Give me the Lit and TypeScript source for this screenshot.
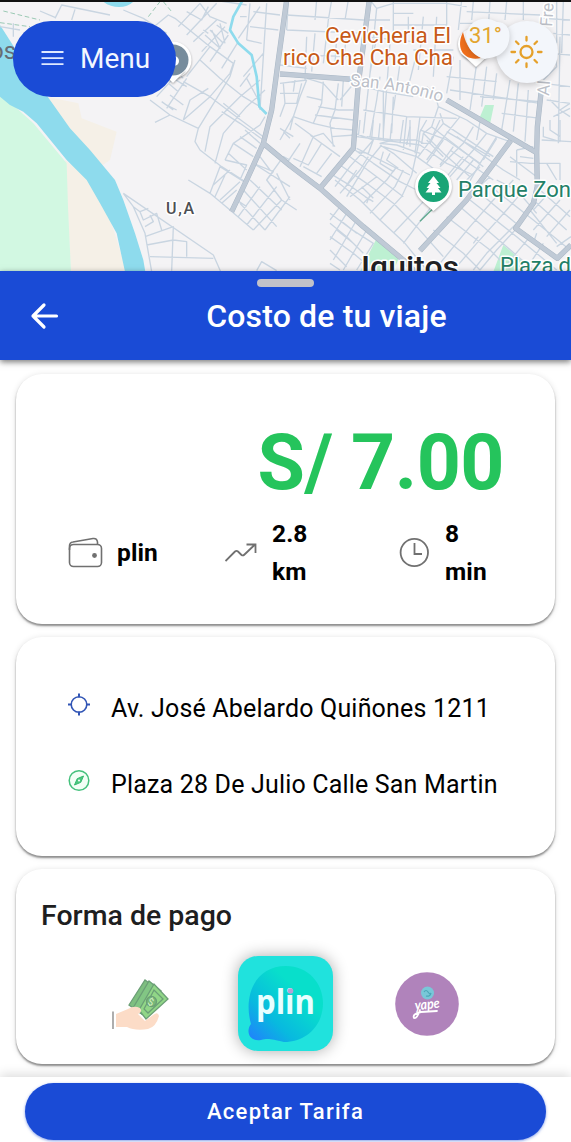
import { LitElement, html, css, svg } from "lit";
import { customElement, property } from "lit/decorators.js";

/* Street traces are kept in sheets of a third of a pixel per unit. */
const westStreets = [
  "M165 55L185 15L330 45M120 33L165 52M225 28L215 60M0 80L60 90M40 70V110M370 30L430 55L500 100",
  "M370 580L640 765L662 815M370 580L400 620L435 700L455 815M400 620L420 635L445 625M420 635L430 660L470 640L485 690M435 680L460 665L450 645M435 710L520 680L515 812M440 735L520 720L560 725V770M450 770L640 775M770 812L785 785L830 812",
].join("");

const centerStreets = [
  "M0 90L55 45L75 55L180 140L250 190M85 80L150 10M110 105L200 10M40 150L0 110M175 20L155 60L110 35M190 0L290 15M150 10L180 50L230 70",
  "M130 125L200 60M165 105L210 145L185 90M180 90L220 130M200 75L235 100M210 70L225 130M155 155L225 80M180 185L235 105M215 205L265 125M175 100L160 90",
  "M110 230L180 140L250 190L240 220L180 290L100 360M0 265L60 205L100 235M20 290L70 235L110 260M50 325L110 235M60 285L100 315M35 305L70 330M85 275L55 250M100 245L180 290L265 355L340 410M150 180L210 235L280 290L330 320",
  "M0 300L60 345L145 385L135 425L150 450L215 500L285 545M15 367L60 345M80 330L50 315M100 360L120 300L175 265M165 455L180 380L270 290L330 240M145 385L240 230L255 180M195 490L220 400L290 320L345 270M215 335L270 370L340 420",
  "M225 480L250 430L330 375L345 350M225 480L290 495L270 540M250 430L310 470M270 410L320 445M235 460L290 510M285 390L330 430M220 310L270 350M290 235L325 300M300 220L270 260M280 230L340 160M265 115L330 20M270 50H290M290 120L335 130M350 10L330 330M300 10L290 120M310 35L390 45M300 80L385 90",
  "M115 540L180 580L240 630L310 690M180 580L210 500L290 550M195 590L225 525M210 600L270 545M240 510L190 555M215 610L260 570M285 545L310 490L370 515L350 540L395 600L440 630M260 600L290 620M310 490L420 560M300 540L395 630M280 570L380 680M270 610L345 690M265 650L330 560M290 675L380 560M310 690L395 600M345 690L420 590M350 540L400 470L420 480M380 520L420 600M330 470L360 510",
].join("");

const eastStreets = [
  "M25 0L20 90M20 45L250 60M20 90L250 100M110 0L105 60M155 0L145 60L130 190M205 0L195 60M80 110L75 240M10 165L250 170M45 150L40 200M105 100L95 215M170 110L165 195M0 195L80 205M200 90L190 200",
  "M270 0L290 25L340 10H500L560 20M290 25L270 220M340 0V100M340 40H400M340 75H500M385 50V100M430 50L415 210M500 0V110M470 50L460 230M400 150H520M330 130L310 400M290 110L270 220L250 400M360 190L340 330M405 180L385 260M250 60H330M250 110L400 125M540 70H580M545 0L535 90M520 170L500 280",
  "M580 5L575 60M630 5L625 80M680 5L675 60M730 5V60M560 35L780 45M830 5V130M850 5L845 160M790 55L870 60M820 100L870 105M810 160L870 165M820 130L830 200L790 240",
  "M540 180V300M590 190L570 330M620 200L605 320M650 220L640 300M690 240L665 390M715 250L700 395M745 270L735 425M500 230L650 245M510 270L780 310M600 290L780 305M665 340L780 355M790 250L870 260M840 110L835 430M800 300L870 310M810 300L840 330L870 310M820 350L870 325M840 330L870 350",
  "M0 250L80 240M10 250L15 310H50L65 250M0 280H55M45 240L40 275M80 235L130 250L175 300M80 240L60 290L40 350L30 390M130 245L125 310L100 370L40 350M80 290L125 300M115 320L175 330H220M175 250L165 330L150 370L160 440M190 240L185 320M230 240L180 300M105 345L220 360M165 385L220 390M100 370L165 385M155 410L225 405M15 310L0 350M0 385L40 410M0 420L40 350M45 370L100 410L60 500M10 395L30 415M90 405L180 470M125 430L85 495L40 475M155 460L110 520M165 440L130 400L100 410M70 500L125 530M20 490L60 430",
  "M250 260L310 275L400 290M250 330L380 350L530 355M300 230L290 300L270 410M310 270L310 420M340 290L335 400M380 350L370 450M390 360V440M420 350L405 460M440 260L465 280L475 320L455 380L430 400L425 430L450 430L465 400L490 370L480 340M260 410L340 420H410L430 430M340 420L300 430L350 435L420 460",
  "M475 320L560 360L620 400L690 425M490 370L580 430L640 470M455 380L545 450L610 500M430 400L490 460L570 530M540 350L500 400L440 480M580 380L550 430L480 500M620 400L580 450L510 530M650 410L600 490L560 560",
].join("");

const southStreets = [
  "M75 40L130 60L115 100L80 95M80 50L270 75L350 130L430 165M90 0L85 50M130 0L125 55M150 10L145 60M185 10L180 65M220 0L210 70M240 20L230 75M270 35L265 75L245 165M160 80L260 110L330 160M80 85L240 165M75 90L130 130L210 185L260 210M150 75L190 100L260 160M160 95L150 130L190 155L200 140M205 145L170 120L180 100",
  "M130 60L60 140L15 200M155 75L110 130L50 230M115 110L90 150L30 220M200 140L170 180L100 250M220 150L195 200L120 280M245 165L215 230L150 300M280 245L190 340M300 265L220 370M15 180L90 240L150 300L225 370L290 450M0 160L50 190L120 240M30 135L110 190L190 250L260 320L340 410M60 110L140 170L220 230M60 230L140 170M40 210L80 150M95 200L130 235M105 230L130 245M120 225L110 250",
  "M0 280L60 325L130 370L80 450M30 260L0 300M50 280L0 360M80 300L10 420M110 330L40 450M0 310L50 350L100 400M0 350L70 400L130 450M0 390L50 440M30 300L80 340M20 330L70 370M0 430L30 450",
  "M360 90L490 180M380 50L520 150M350 35L480 110M290 60L340 110M310 50L265 110M340 60L290 130M370 80L330 135M400 110L350 170M430 120L380 180M450 140L390 200M480 170L430 215M270 30L350 60L450 130M290 0L270 35M330 0L300 65M450 5L440 60M500 55L460 120",
  "M540 110L620 170L610 250M520 150L570 180M500 180L560 210L620 280M470 190L610 300L720 390M450 220L570 320M420 240L560 350L680 450M390 260L530 380L610 450M350 290L480 390L540 450M310 330L400 400L450 450M550 180L490 240L420 320L330 430M590 200L530 270L440 370L380 440M620 230L570 300L470 400L430 450M560 325L500 390L450 450M600 350L550 410L520 450M640 370L600 430M430 370L445 350M620 340L610 370",
  "M540 125L600 130H690V180M560 90L610 80M560 90V170M570 110L610 115M650 130L680 180M690 130L690 180M635 60L723 65M640 20L640 50L690 65V0M660 0V30L690 50M630 210L720 290M610 240L710 330M600 270L680 370M720 270L650 350M690 240L610 330M660 215L610 270M723 350L680 380",
].join("");

const roads =
  "M860 0L835 180L815 330L790 430L740 540L695 635M790 430L870 497L960 565L1090 680L1210 780L1260 830M840 222L870 224L1082 240M1108 0L1075 250L1060 445L960 565M1340 300L1610 458M1532 422L1400 600L1260 752M1624 270L1612 380L1610 458L1612 560L1600 610L1547 685L1672 775L1713 735";

@customElement("city-map")
export class CityMap extends LitElement {
  static styles = css`
    :host { display: block; height: 271px; overflow: hidden; }
    svg { display: block; font-family: Roboto, sans-serif; }
    .land { fill: #f4f3f5; }
    .park { fill: #d2f8e2; }
    .plaza { fill: #bdf0d2; }
    .sand { fill: #f5f0e7; }
    .water { fill: #8edbed; }
    .creek { fill: none; stroke: #8edbed; stroke-width: 8; stroke-linejoin: round; }
    .street { fill: none; stroke: #c9d5e1; stroke-width: 4; stroke-linejoin: round; }
    .road-edge { fill: none; stroke: #a9b7c5; stroke-width: 16; stroke-linejoin: round; }
    .road { fill: none; stroke: #c0cad6; stroke-width: 13; stroke-linejoin: round; }
    .halo { paint-order: stroke; stroke: #fff; stroke-width: 3; stroke-linejoin: round; }
    .food { fill: #c75a18; font-size: 22.500px; }
    .green { fill: #238067; font-size: 22px; }
    .avenue { fill: #bcc0c8; font-size: 17px; }
    .city { fill: #202124; font-size: 29px; font-weight: 500; }
    .zone { fill: #4c4f53; font-size: 16px; font-weight: 500; }
    .temp { fill: #e3a52f; font-size: 22px; }
    .bubble { fill: #f3f6fb; filter: drop-shadow(0 2px 3px #0003); }
    .pin { fill: #fff; filter: drop-shadow(0 1px 1px #0005); }
  `;
  render() {
    return html`<svg width="571" height="271" viewBox="0 0 571 271">
      <rect class="land" width="571" height="271" />
      <g transform="scale(.33333)">
        <path class="sand" d="M140 290L235 310L245 355L350 395L330 480L300 500L200 400ZM195 480L300 560L380 815H213Z" />
        <path class="park" d="M0 280L100 370L200 490L204 620L213 815H0Z" />
        <path class="plaza" d="M1455 315H1482L1470 372L1440 350ZM1130 715L1200 765L1180 815H1080ZM1510 735L1570 785L1550 815H1480Z" />
        <path class="water" d="M0 75L80 200L150 300L210 385L270 450L345 540L370 600L405 700L430 780L436 815H375L350 700L300 610L260 540L200 480L110 370L70 335L30 315L0 290ZM310 5C340 28 380 25 400 5Z" />
        <path class="street" d=${westStreets} />
        <path class="street" transform="translate(450)" d=${centerStreets} />
        <path class="street" transform="translate(840)" d=${eastStreets} />
        <path class="street" transform="translate(990 360)" d=${southStreets} />
        <path class="creek" d="M728 0L700 50L690 90L715 130L755 165L770 230L778 320L800 342" />
        <path class="road-edge" d=${roads} />
        <path class="road" d=${roads} />
        <path d="M10 33L120 60M0 68L90 80M445 50L480 5M490 5L515 35" fill="none" stroke="#9bc9b4" stroke-width="3" stroke-dasharray="14 8" />
        <path d="M1260 664L1300 625" stroke="#5fa98d" stroke-width="4" />
      </g>
      <text x="-10" y="59" font-size="24" fill="#666c74">os</text>
      <circle cx="173" cy="60" r="18.500" class="pin" /><path class="pin" d="M160 70L173 83L186 70Z" />
      <circle cx="173" cy="60" r="15.500" fill="#778c9c" /><circle cx="174" cy="61" r="5" fill="#fff" />
      <text class="food halo" x="325" y="43" textLength="126">Cevicheria El</text>
      <text class="food halo" x="283" y="65" textLength="170">rico Cha Cha Cha</text>
      <path id="ave" d="M350 86Q405 89 446 104" fill="none" />
      <text class="avenue halo"><textPath href="#ave" textLength="93">San Antonio</textPath></text>
      <text class="avenue halo" transform="translate(552 27) rotate(-86)">Fre</text>
      <text class="avenue halo" transform="translate(549 96) rotate(-86)">Al</text>
      <circle class="bubble" cx="527" cy="52" r="31" />
      <circle class="pin" cx="474" cy="44" r="16" /><path class="pin" d="M461 53L476 67L490 54Z" />
      <path d="M463 32C455 48 464 62 481 58C472 54 466 46 463 32Z" fill="#f0701d" />
      <path class="bubble" d="M466 34C470 19 485 15 497 22C510 22 512 36 507 47C501 57 493 57 485 59C474 56 466 48 466 34Z" />
      <text class="temp" x="469" y="43" textLength="33">31°</text>
      <g fill="none" stroke="#e5a02a" stroke-width="2.300" stroke-linecap="round">
        <circle cx="526.500" cy="52" r="6" />
        <path d="M526.500 37v3.500M526.500 63.500v3.500M511.500 52h3.500M538 52h3.500M516 41.500l2.500 2.500M534.500 60l2.500 2.500M516 62.500l2.500-2.500M534.500 44l2.500-2.500" />
      </g>
      <path class="pin" d="M433.500 168a18.500 18.500 0 0 1 12 32.500L433.500 211L421.500 200.500a18.500 18.500 0 0 1 12-32.500Z" />
      <circle cx="433.500" cy="186.500" r="15.500" fill="#19a576" />
      <path d="M433.500 176l-5.500 7h2.500l-4 5h2.500l-3.500 4.500h6.500v2.500h3v-2.500h6.500l-3.500-4.500h2.500l-4-5h2.500Z" fill="#fff" />
      <text class="green halo" x="458" y="197" textLength="113">Parque Zon</text>
      <text class="city halo" x="361" y="276.500" textLength="98" lengthAdjust="spacingAndGlyphs">Iquitos</text>
      <text class="green halo" x="500" y="273" textLength="71">Plaza d</text>
      <text class="zone halo" x="166" y="214" textLength="28">U,A</text>
    </svg>`;
  }
}

const glyphs: Record<string, unknown> = {
  wallet: svg`<g fill="none" stroke="currentColor" stroke-width="1.600" stroke-linejoin="round">
    <rect x="1.500" y="8.500" width="32" height="22" rx="4" /><path d="M1.500 14V10Q1.500 6.500 5 6L25 2.500Q29 2 29.500 6V8" /></g>
    <circle cx="26.500" cy="19.500" r="2.400" fill="currentColor" />`,
  trend: svg`<path d="M0.500 25L10 15.500Q11.500 14.300 13 15.500L16.500 19Q18 20 19.500 18.500L30 8.500M21.500 8.500H30.500V17" fill="none" stroke="currentColor" stroke-width="1.800" />`,
  clock: svg`<circle cx="16.300" cy="16.500" r="13.700" fill="none" stroke="currentColor" stroke-width="1.800" /><path d="M16.500 7V18H24" fill="none" stroke="currentColor" stroke-width="1.800" />`,
  origin: svg`<g fill="none" stroke="#3155b5" stroke-width="1.600"><circle cx="12" cy="11.500" r="7.800" /><path stroke-width="2" d="M12 0.500v4M12 18.500v4M1 11.500h4M19 11.500h4" /></g>`,
  compass: svg`<circle cx="12" cy="11.500" r="9.800" fill="#f2fff6" stroke="#45c17d" stroke-width="1.500" /><path d="M16.500 7L13.800 13.300L7.500 16L10.200 9.700Z" fill="#4cc880" stroke="#35b970" /><circle cx="12" cy="11.500" r="1" fill="#fff" />`,
};

@customElement("ride-fact")
export class RideFact extends LitElement {
  @property() icon = "";
  @property() label = "";
  static styles = css`
    :host { display: flex; align-items: center; color: #707070; }
    svg { flex: none; }
    .label { color: #000; font: 700 24.500px/38px Roboto, sans-serif; letter-spacing: .1px; white-space: pre-line; }
  `;
  render() {
    return html`<svg width="47" height="34" viewBox="0 0 47 34">${glyphs[this.icon]}</svg><span class="label">${this.label}</span>`;
  }
}

@customElement("app-root")
export class AppRoot extends LitElement {
  static styles = css`
    :host { display: flex; flex-direction: column; position: relative; height: 1142px; overflow: hidden; background: #fff; font-family: Roboto, sans-serif; color: #000; }
    * { box-sizing: border-box; }
    .status { position: absolute; top: 0; left: 0; right: 0; height: 1.500px; background: #111; }
    .menu { position: absolute; left: 13px; top: 21px; width: 163px; height: 76px; border: 0; border-radius: 38px; background: #1a4bd6; color: #f3f7ff; display: flex; align-items: center; padding: 0 0 2px 28px; gap: 15px; font: 400 28px Roboto, sans-serif; }
    .bar { flex: none; height: 89px; background: #1a4bd6; display: grid; grid-template-columns: 82px 1fr; align-items: center; color: #fff; box-shadow: 0 2px 6px #0008; z-index: 1; position: relative; }
    .back { margin: 0 0 0 30px; }
    .title { margin: 0; text-align: center; font-size: 32px; font-weight: 500; letter-spacing: .15px; }
    .grip { position: absolute; left: 257px; top: 8px; width: 57px; height: 8px; border-radius: 4px; background: #c2c2c9; }
    .cards { flex: 1; display: flex; flex-direction: column; gap: 13px; padding: 14px 16px 0; min-height: 0; }
    .card { flex: none; background: #fff; border-radius: 26px; box-shadow: 0 2px 2px #0006, 0 1px 6px #0002; }
    .fare { height: 250px; padding: 44px 28px 0 52px; }
    .price { height: 90px; line-height: 90px; text-align: right; padding-right: 23px; font-size: 77px; font-weight: 700; color: #25c45c; letter-spacing: -.5px; }
    .facts { display: grid; grid-template-columns: 157px 173px 1fr; align-items: center; margin-top: 7px; }
    .wide { gap: 2px; }
    .route { height: 219px; padding: 52px 40px 0 51px; display: flex; flex-direction: column; gap: 38px; }
    .stop { display: flex; align-items: center; gap: 20px; height: 38px; font-size: 25px; letter-spacing: .18px; white-space: nowrap; }
    .stop svg { flex: none; margin-top: -6px; }
    .pay { height: 195px; padding: 27px 25px 0; }
    .heading { margin: 0; font-size: 28.500px; line-height: 40px; font-weight: 500; color: #1e1e20; }
    .methods { display: grid; grid-template-columns: repeat(3, 1fr); width: 426px; margin: 20px 0 0 31px; justify-items: center; align-items: center; }
    .cash { margin-right: 7px; }
    .plin { width: 95px; height: 95px; border-radius: 20px; background: #20e2dd; box-shadow: 0 0 16px #0005; }
    .foot { flex: none; position: relative; height: 65px; background: #fff; padding: 6px 25px 0; box-shadow: 0 -3px 10px #0002; }
    .accept { width: 521px; height: 57px; border: 0; border-radius: 29px; background: #1a4bd6; color: #fff; font: 500 22px Roboto, sans-serif; letter-spacing: 1.300px; display: block; box-shadow: 0 1px 3px #1a4bd688; }
    .logo { display: block; font-family: Roboto, sans-serif; }
    .plin-word { font: 700 34px "Open Sans", sans-serif; fill: #e9ffff; }
    .yape-word { font: italic 700 14px Lato, sans-serif; fill: #fff; }
  `;

  render() {
    return html`
      <city-map></city-map>
      <div class="status"></div>
      <button class="menu">
        <svg width="24" height="16" viewBox="0 0 24 16"><path d="M0.500 2H22.500M0.500 8.200H22.500M0.500 14.200H22.500" stroke="#dfe9ff" stroke-width="1.800" /></svg>
        Menu
      </button>
      <header class="bar">
        <span class="grip"></span>
        <svg class="back" width="30" height="30" viewBox="0 0 30 30"><path d="M14 4L3 15L14 26M3 15H26.500" fill="none" stroke="#fff" stroke-width="3.200" stroke-linecap="round" stroke-linejoin="round" /></svg>
        <h1 class="title">Costo de tu viaje</h1>
      </header>
      <main class="cards">
        <section class="card fare">
          <div class="price">S/ 7.00</div>
          <div class="facts">
            <ride-fact class="wide" icon="wallet" label="plin"></ride-fact>
            <ride-fact icon="trend" label=${"2.8\nkm"}></ride-fact>
            <ride-fact icon="clock" label=${"8\nmin"}></ride-fact>
          </div>
        </section>
        <section class="card route">
          <div class="stop"><svg width="24" height="24">${glyphs.origin}</svg>Av. José Abelardo Quiñones 1211</div>
          <div class="stop"><svg width="24" height="24">${glyphs.compass}</svg>Plaza 28 De Julio Calle San Martin</div>
        </section>
        <section class="card pay">
          <h2 class="heading">Forma de pago</h2>
          <div class="methods">
            <svg class="logo cash" width="64" height="64" viewBox="0 0 64 64">
              <g stroke="#6b9f76" stroke-width="1.300">
                <path d="M21 33L37 8L50 18L34 42Z" fill="#7ebf80" /><path d="M25 36L41 9L53 19L37 44Z" fill="#82c684" />
                <path d="M31 38L46 12L60 27L38 47Z" fill="#91d687" /><path d="M36 37L46 18L55 27L40 41Z" fill="none" />
                <circle cx="43.500" cy="29.500" r="5" fill="#78b878" />
              </g>
              <text x="40" y="33.500" font-size="10" fill="#d8f3c9" transform="rotate(20 43 30)">$</text>
              <path d="M8 42L20 37Q26 33 32 36Q35 40 30 42L37 49L45 43Q50 39 51 44Q48 55 40 57Q27 59 19 55H8Z" fill="#fcdcc7" />
              <path d="M5 39.500V57" stroke="#777" stroke-width="1.200" />
            </svg>
            <div class="plin">
              <svg class="logo" width="95" height="95" viewBox="0 0 95 95">
                <defs><linearGradient id="pg" x1="0" y1="1" x2=".65" y2=".3"><stop stop-color="#237cff" /><stop offset=".45" stop-color="#08b9df" /><stop offset="1" stop-color="#08dfcb" /></linearGradient></defs>
                <path d="M48 10C70 10 85 27 85 47C85 70 68 86 46 86C33 83 30 82 23 84C10 86 8 74 13 68C5 40 17 10 48 10Z" fill="url(#pg)" />
                <text class="plin-word" x="18" y="57.500" textLength="59" lengthAdjust="spacingAndGlyphs">plin</text>
                <circle cx="52.500" cy="35" r="2.800" fill="#b7a0d5" />
              </svg>
            </div>
            <svg class="logo" width="64" height="64" viewBox="0 0 64 64">
              <circle cx="32" cy="32" r="31.800" fill="#b083bb" />
              <circle cx="32.500" cy="21" r="6.500" fill="#79c7d8" /><path d="M29 20q2-3 4 0t3 1q-1 4-5 3" fill="none" stroke="#4ba7b8" stroke-width="1.200" />
              <text class="yape-word" x="20" y="37" textLength="25" lengthAdjust="spacingAndGlyphs" transform="rotate(-6 32 36)">yape</text>
              <path d="M25 38Q22 47 19 46Q17 42 26 40L42 39" fill="none" stroke="#fff" stroke-width="1.800" stroke-linecap="round" />
            </svg>
          </div>
        </section>
      </main>
      <footer class="foot"><button class="accept">Aceptar Tarifa</button></footer>
    `;
  }
}
